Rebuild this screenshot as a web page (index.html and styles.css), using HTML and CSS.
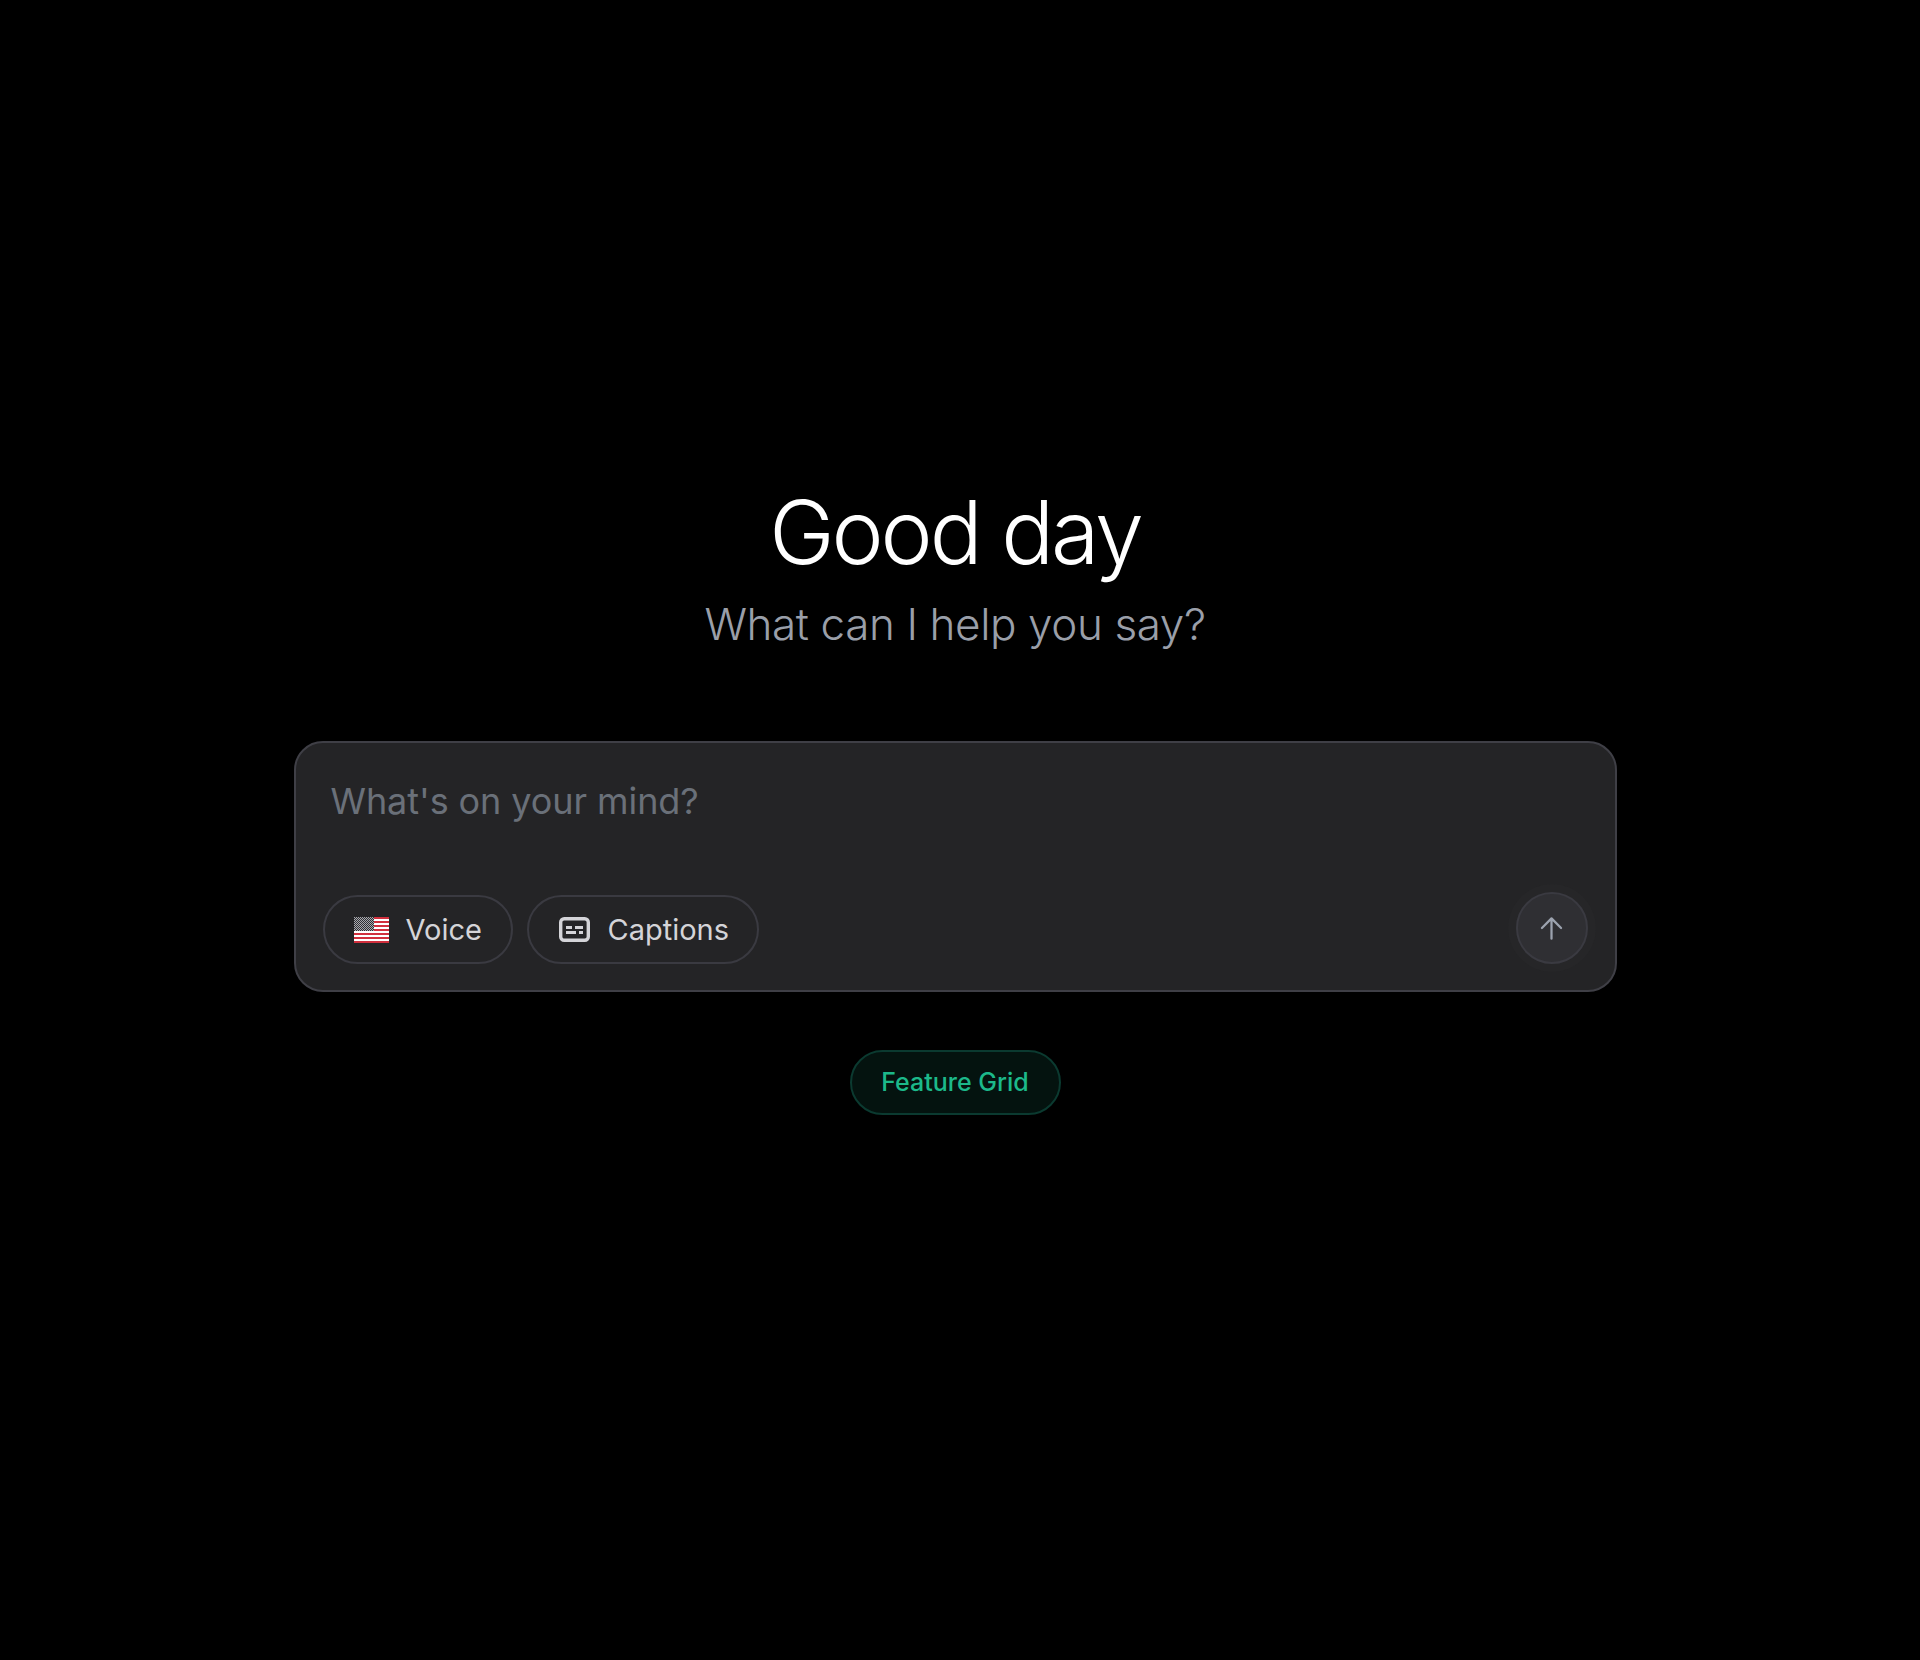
FILE: index.html
```html
<!DOCTYPE html>
<html lang="en">
<head>
<meta charset="utf-8">
<title>Good day</title>
<link rel="stylesheet" href="styles.css">
</head>
<body>
<main class="page">
  <h1 class="title">Good day</h1>
  <p class="subtitle">What can I help you say?</p>
  <section class="composer">
    <div class="placeholder">What's on your mind?</div>
    <div class="toolbar">
      <div class="tools">
        <button class="pill pill-voice">
          <svg class="flag" viewBox="0 0 35 26" width="35" height="26" aria-hidden="true">
            <rect width="35" height="26" fill="#fff"/>
            <g fill="#d12f3d">
              <rect width="35" height="2"/><rect y="4" width="35" height="2"/><rect y="8" width="35" height="2"/><rect y="12" width="35" height="2"/><rect y="16" width="35" height="2"/><rect y="20" width="35" height="2"/><rect y="24" width="35" height="2"/>
            </g>
            <defs>
              <pattern id="stars" width="2" height="2" patternUnits="userSpaceOnUse">
                <rect width="2" height="2" fill="#2f3035"/>
                <rect width="1" height="1" fill="#a8a8ac"/>
                <rect x="1" y="1" width="1" height="1" fill="#a8a8ac"/>
              </pattern>
            </defs>
            <rect width="20" height="14" fill="url(#stars)"/>
          </svg>
          <span>Voice</span>
        </button>
        <button class="pill pill-captions">
          <svg class="cc" viewBox="0 0 31 25" width="31" height="25" fill="none" aria-hidden="true">
            <rect x="1.7" y="1.7" width="27.6" height="21.6" rx="3.5" stroke="#d4d4d8" stroke-width="3.4"/>
            <path d="M7 10.5h6M16 10.5h8M7 15.5h10M20 15.5h4" stroke="#d4d4d8" stroke-width="2.8"/>
          </svg>
          <span>Captions</span>
        </button>
      </div>
      <button class="send" aria-label="Send">
        <svg viewBox="0 0 24 24" width="27" height="27" fill="none" stroke="#9ca3af" stroke-width="2" stroke-linecap="round" stroke-linejoin="round" aria-hidden="true">
          <path d="M12 21V3M3.5 11.5 12 3l8.5 8.5"/>
        </svg>
      </button>
    </div>
  </section>
  <button class="feature">Feature Grid</button>
</main>
</body>
</html>
```
FILE: styles.css
```css
* { box-sizing: border-box; }
html, body { margin: 0; height: 100%; background: #000; }
body { font-family: Inter, "Liberation Sans", sans-serif; }
.page {
  min-height: 1660px;
  display: flex;
  flex-direction: column;
  align-items: center;
  padding: 484px 10px 0 0;
}
.title {
  margin: 0;
  font-size: 88px;
  line-height: 96px;
  font-weight: 300;
  letter-spacing: -3.1px;
  color: #fff;
}
.subtitle {
  margin: 16px 0 0;
  font-size: 44px;
  line-height: 56px;
  font-weight: 300;
  letter-spacing: -.4px;
  color: #9a9fa9;
}
.composer {
  width: 1323px;
  height: 251px;
  margin-top: 89px;
  padding: 31px 28px 26px 27px;
  background: #242426;
  border: 2px solid #3f3f46;
  border-radius: 29px;
  display: flex;
  flex-direction: column;
  justify-content: space-between;
}
.placeholder {
  padding-left: 8px;
  font-size: 36px;
  line-height: 54px;
  letter-spacing: -.08px;
  color: #6a7079;
}
.toolbar { display: flex; align-items: flex-end; justify-content: space-between; }
.tools { display: flex; gap: 14px; }
.pill {
  height: 69px;
  display: flex;
  align-items: center;
  background: transparent;
  border: 2px solid #3a3a41;
  border-radius: 35px;
  color: #d4d4d8;
  font: 400 29px/1 Inter, "Liberation Sans", sans-serif;
}
.pill svg { flex-shrink: 0; }
.pill-voice { width: 190px; padding: 0 29px; gap: 17px; }
.pill-captions { width: 232px; padding: 0 30px; gap: 18px; }
.send {
  width: 72px;
  height: 72px;
  margin: 0 -1px 0 0;
  padding: 0;
  display: flex;
  align-items: center;
  justify-content: center;
  background: #2f2f33;
  border: 2px solid #3a3a41;
  border-radius: 50%;
  box-shadow: 0 0 0 8px rgba(63, 63, 70, .08);
}
.feature {
  margin-top: 58px;
  width: 211px;
  height: 65px;
  background: #04130f;
  border: 2px solid #0b3a30;
  border-radius: 33px;
  color: #1cb98a;
  font: 500 25px/1 Inter, "Liberation Sans", sans-serif;
}
```
